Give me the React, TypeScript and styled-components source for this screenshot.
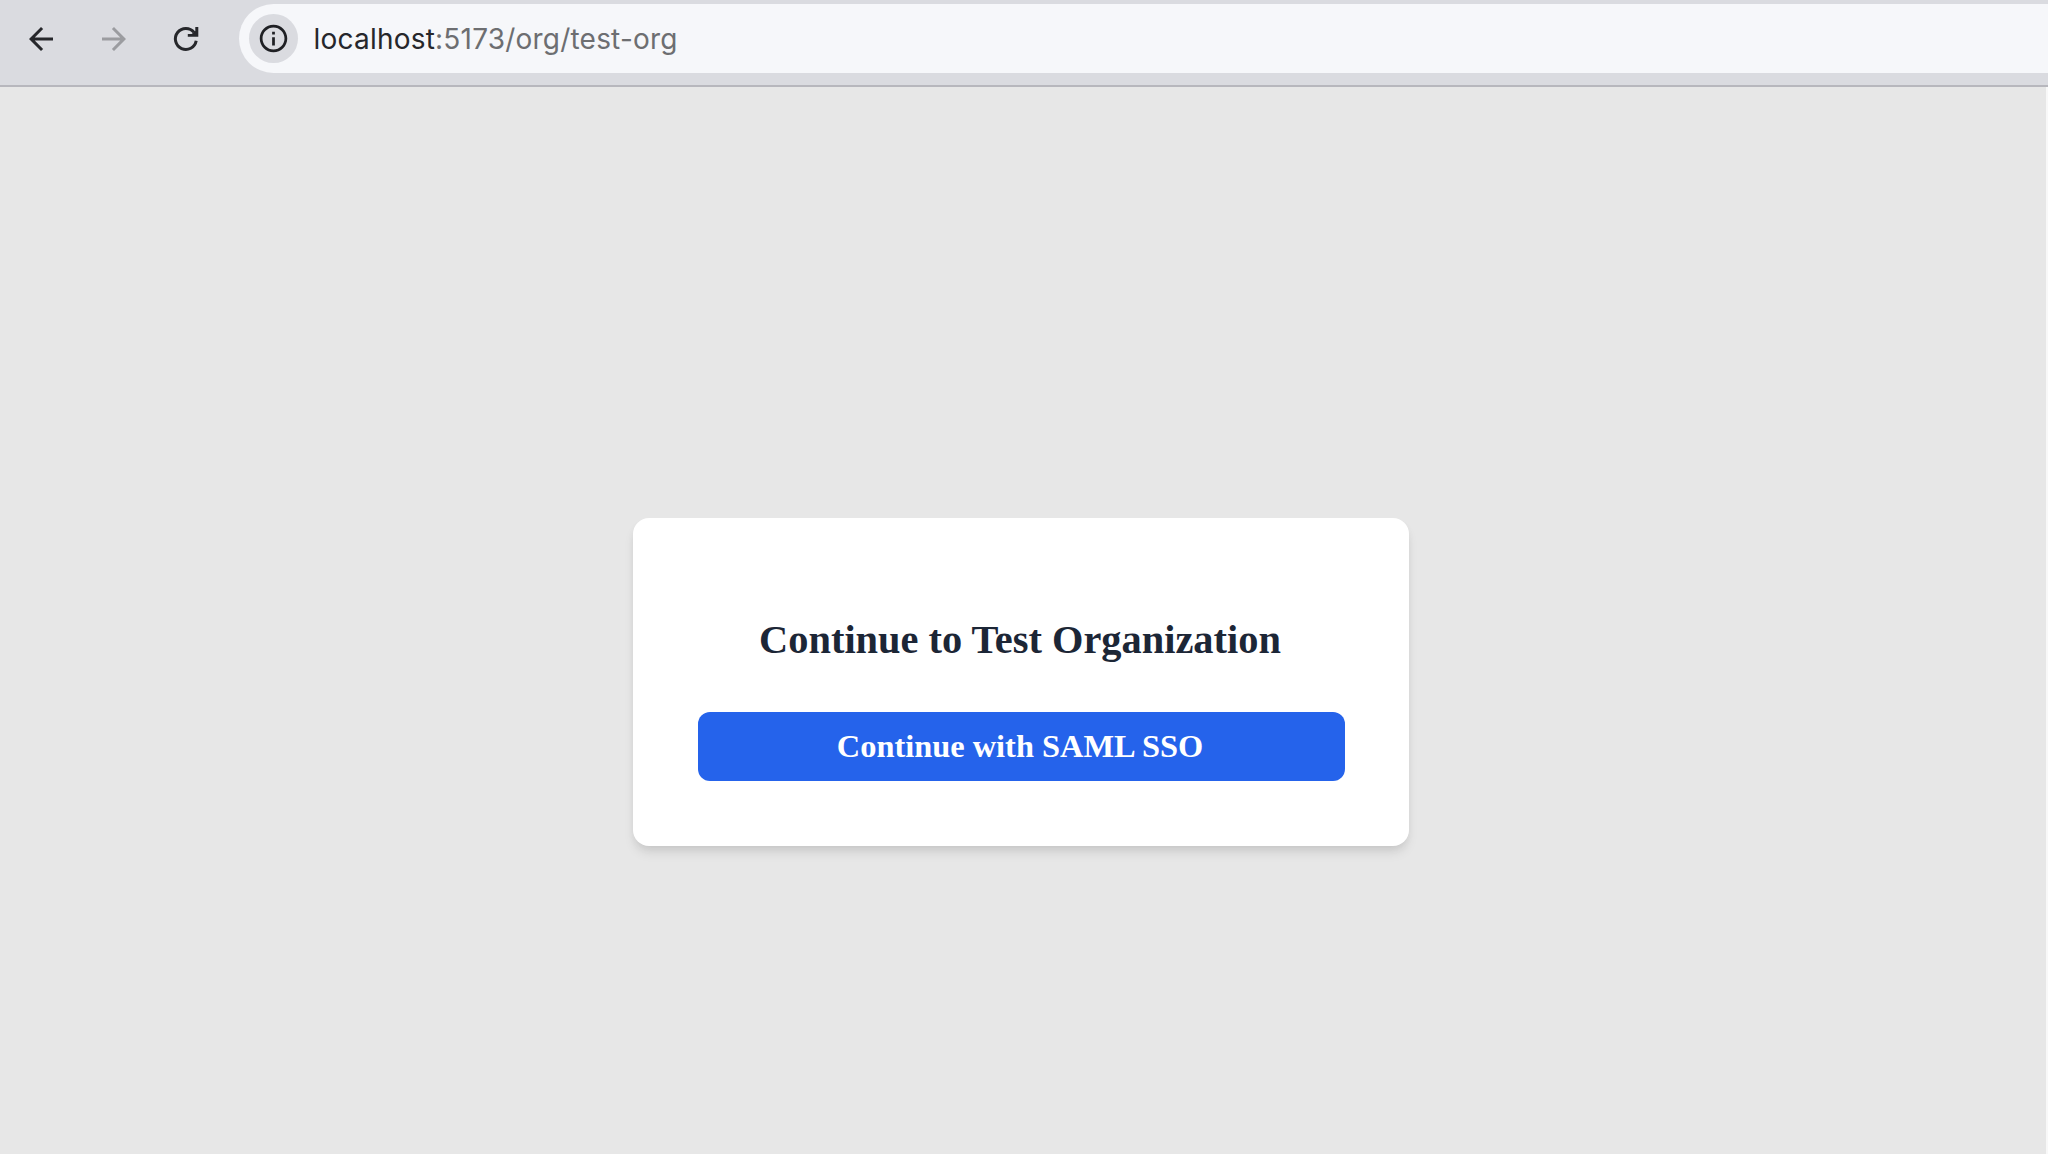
import React from 'react';
import styled, { createGlobalStyle } from 'styled-components';

const GlobalStyle = createGlobalStyle`
  * {
    box-sizing: border-box;
  }

  body {
    margin: 0;
    background: #e7e7e7;
    font-family: 'Liberation Serif', 'Times New Roman', serif;
  }
`;

const Window = styled.div`
  display: flex;
  flex-direction: column;
  height: 100vh;
  overflow: hidden;
`;

const Toolbar = styled.header`
  display: flex;
  align-items: center;
  height: 87px;
  padding: 4px 0 12px 23px;
  background: #dadbe0;
  border-bottom: 2px solid #b7b7bd;
`;

const NavButton = styled.button<{ $muted?: boolean }>`
  display: flex;
  width: 36px;
  height: 36px;
  margin-right: 36.5px;
  padding: 0;
  border: none;
  background: none;
  color: ${({ $muted }) => ($muted ? '#9b9ca0' : '#26272b')};
`;

const Icon = styled.svg`
  width: 36px;
  height: 36px;
  fill: currentColor;
`;

const AddressBar = styled.div`
  flex: 1;
  display: flex;
  align-items: center;
  align-self: stretch;
  margin-left: -2px;
  padding-left: 10px;
  background: #f6f7fa;
  border-radius: 35px 0 0 35px;
`;

const SiteInfo = styled.span`
  display: flex;
  align-items: center;
  justify-content: center;
  width: 49px;
  height: 49px;
  margin-right: 16px;
  border-radius: 50%;
  background: #dadbe0;
  color: #1f2024;
`;

const InfoIcon = styled.svg`
  width: 33px;
  height: 33px;
  fill: currentColor;
`;

const Url = styled.span`
  padding-top: 1px;
  font-family: Inter, 'Liberation Sans', sans-serif;
  font-size: 28px;
  line-height: 34px;
  letter-spacing: 0.21px;
  color: #6d6e71;
  white-space: nowrap;
`;

const Host = styled.span`
  color: #26272b;
`;

const Page = styled.main`
  flex: 1;
  display: flex;
  align-items: flex-start;
  justify-content: center;
  padding: 431px 4px 0 0;
  border-right: 2px solid #f8f8f8;
`;

const Card = styled.section`
  width: 776px;
  height: 327.5px;
  padding: 99px 64.5px 0;
  background: #fff;
  border-radius: 16px;
  box-shadow: 0 8px 12px -2px rgba(0, 0, 0, 0.1), 0 4px 8px -2px rgba(0, 0, 0, 0.06);
  text-align: center;
`;

const Title = styled.h2`
  margin: 0 0 49px -2px;
  font-size: 40.4px;
  line-height: 46px;
  font-weight: 700;
  color: #1c2636;
  white-space: nowrap;
`;

const SsoButton = styled.button`
  display: block;
  width: 100%;
  height: 69px;
  padding: 0 2px 1px 0;
  border: none;
  border-radius: 12px;
  background: #2563eb;
  color: #fff;
  font-family: inherit;
  font-size: 32.4px;
  font-weight: 700;
`;

const App: React.FC = () => {
  return (
    <Window>
      <GlobalStyle />
      <Toolbar>
        <NavButton aria-label="Back">
          <Icon viewBox="0 0 24 24">
            <path d="M20 11H7.83l5.59-5.59L12 4l-8 8 8 8 1.41-1.41L7.83 13H20v-2z" />
          </Icon>
        </NavButton>
        <NavButton aria-label="Forward" $muted>
          <Icon viewBox="0 0 24 24">
            <path d="M12 4l-1.41 1.41L16.17 11H4v2h12.17l-5.58 5.59L12 20l8-8z" />
          </Icon>
        </NavButton>
        <NavButton aria-label="Reload">
          <Icon viewBox="0 0 24 24">
            <path d="M18.8 13.2A7 7 0 1 1 17.4 7.6" fill="none" stroke="currentColor" strokeWidth="2" />
            <path d="M20.2 4v6.5h-7V8.7h2.6l2.4-2V4z" />
          </Icon>
        </NavButton>
        <AddressBar>
          <SiteInfo>
            <InfoIcon viewBox="0 0 24 24">
              <path d="M11 7h2v2h-2zm0 4h2v6h-2zm1-9C6.48 2 2 6.48 2 12s4.48 10 10 10 10-4.48 10-10S17.52 2 12 2zm0 18c-4.41 0-8-3.59-8-8s3.59-8 8-8 8 3.59 8 8-3.59 8-8 8z" />
            </InfoIcon>
          </SiteInfo>
          <Url>
            <Host>localhost</Host>:5173/org/test-org
          </Url>
        </AddressBar>
      </Toolbar>
      <Page>
        <Card>
          <Title>Continue to Test Organization</Title>
          <SsoButton>Continue with SAML SSO</SsoButton>
        </Card>
      </Page>
    </Window>
  );
};

export default App;
